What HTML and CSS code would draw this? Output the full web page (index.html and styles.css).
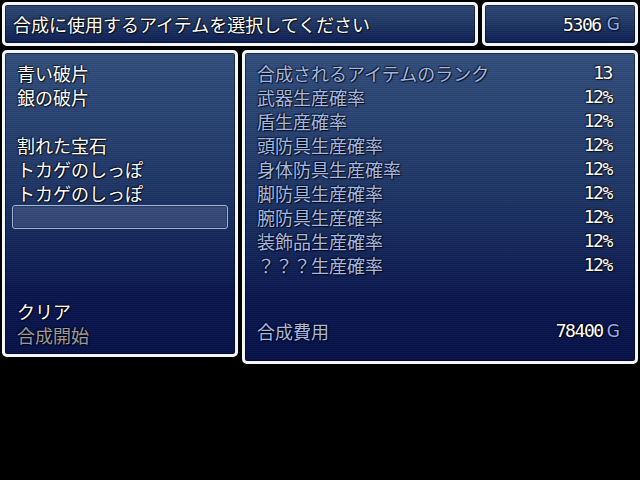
FILE: index.html
```html
<!DOCTYPE html>
<html lang="ja">
<head>
<meta charset="utf-8">
<title>合成</title>
<link rel="stylesheet" href="styles.css">
</head>
<body>
<div class="screen">
  <div class="row">
    <div class="win help"><span class="txt">合成に使用するアイテムを選択してください</span></div>
    <div class="win gold"><span class="num">5306</span><span class="unit">G</span></div>
  </div>
  <div class="row main">
    <div class="win list">
      <ul class="items">
        <li class="item">青い破片</li>
        <li class="item">銀の破片</li>
        <li class="item"></li>
        <li class="item">割れた宝石</li>
        <li class="item">トカゲのしっぽ</li>
        <li class="item">トカゲのしっぽ</li>
        <li class="item sel"></li>
      </ul>
      <ul class="items">
        <li class="item">クリア</li>
        <li class="item off">合成開始</li>
      </ul>
    </div>
    <div class="win info">
      <div class="stats">
        <div class="stat"><span class="lbl">合成されるアイテムのランク</span><span class="num">13</span></div>
        <div class="stat"><span class="lbl">武器生産確率</span><span class="num">12%</span></div>
        <div class="stat"><span class="lbl">盾生産確率</span><span class="num">12%</span></div>
        <div class="stat"><span class="lbl">頭防具生産確率</span><span class="num">12%</span></div>
        <div class="stat"><span class="lbl">身体防具生産確率</span><span class="num">12%</span></div>
        <div class="stat"><span class="lbl">脚防具生産確率</span><span class="num">12%</span></div>
        <div class="stat"><span class="lbl">腕防具生産確率</span><span class="num">12%</span></div>
        <div class="stat"><span class="lbl">装飾品生産確率</span><span class="num">12%</span></div>
        <div class="stat"><span class="lbl">？？？生産確率</span><span class="num">12%</span></div>
      </div>
      <div class="stat cost"><span class="lbl">合成費用</span><span class="val"><span class="num">78400</span><span class="unit">G</span></span></div>
    </div>
  </div>
</div>
</body>
</html>
```

FILE: styles.css
```css
html, body {
  margin: 0;
  padding: 0;
  background: #000;
}
.screen {
  width: 640px;
  height: 480px;
  background: #000;
  font-family: "Noto Sans CJK JP", "Noto Sans", sans-serif;
  font-size: 18px;
  color: #fff;
  text-shadow: 0 0 2px rgba(0,0,0,0.9), 1px 1px 1px rgba(0,0,0,0.7), -1px -1px 1px rgba(0,0,0,0.5);
}
.row {
  display: flex;
  align-items: flex-start;
}
.win {
  box-sizing: border-box;
  margin: 2px;
  border: 3px solid #f4f6fa;
  border-radius: 5px;
  box-shadow: 0 0 0 1px rgba(0,0,0,0.85), inset 0 0 0 1px rgba(0,0,0,0.45);
  background:
    repeating-linear-gradient(180deg, rgba(0,0,0,0.07) 0 1px, rgba(255,255,255,0.02) 1px 2px),
    linear-gradient(180deg, #33507f 0%, #1f3768 45%, #0b1850 80%, #07124a 100%);
}
.help {
  width: 476px;
  height: 44px;
  display: flex;
  align-items: center;
  padding-left: 8px;
  background:
    repeating-linear-gradient(180deg, rgba(0,0,0,0.07) 0 1px, rgba(255,255,255,0.02) 1px 2px),
    linear-gradient(180deg, #2f4a78 0%, #203866 50%, #0f1f55 100%);
}
.gold {
  width: 156px;
  height: 44px;
  display: flex;
  align-items: center;
  justify-content: flex-end;
  padding-right: 15px;
  background:
    repeating-linear-gradient(180deg, rgba(0,0,0,0.07) 0 1px, rgba(255,255,255,0.02) 1px 2px),
    linear-gradient(180deg, #2f4a78 0%, #203866 50%, #0f1f55 100%);
}
.num {
  font-family: "DejaVu Sans Mono", "Liberation Mono", monospace;
  font-size: 18px;
  letter-spacing: -1.4px;
}
.unit {
  color: #8fb0f0;
  margin-left: 6px;
  font-family: "DejaVu Sans", "Noto Sans", sans-serif;
  font-size: 17px;
}
.list {
  width: 236px;
  height: 307px;
  padding: 8px 7px 7px;
  display: flex;
  flex-direction: column;
  justify-content: space-between;
}
.items {
  list-style: none;
  margin: 0;
  padding: 0;
}
.item {
  box-sizing: border-box;
  height: 24px;
  line-height: 24px;
  padding-left: 5px;
  white-space: nowrap;
}
.sel {
  border: 1px solid #9fb2d4;
  border-radius: 3px;
  background: rgba(150,170,210,0.22);
  box-shadow: inset 0 0 0 1px rgba(0,0,0,0.2);
}
.off {
  color: rgba(255,255,255,0.6);
}
.info {
  width: 396px;
  height: 314px;
  padding: 8px 0 18px 12px;
  display: flex;
  flex-direction: column;
  justify-content: space-between;
}
.stat {
  display: flex;
  justify-content: space-between;
  align-items: center;
  height: 24px;
  line-height: 24px;
  padding-right: 23px;
  white-space: nowrap;
}
.lbl {
  color: #a2b8e6;
}
.cost {
  padding-right: 15px;
}
.val {
  display: flex;
  align-items: center;
}
.val .unit {
  margin-left: 4px;
}
```
